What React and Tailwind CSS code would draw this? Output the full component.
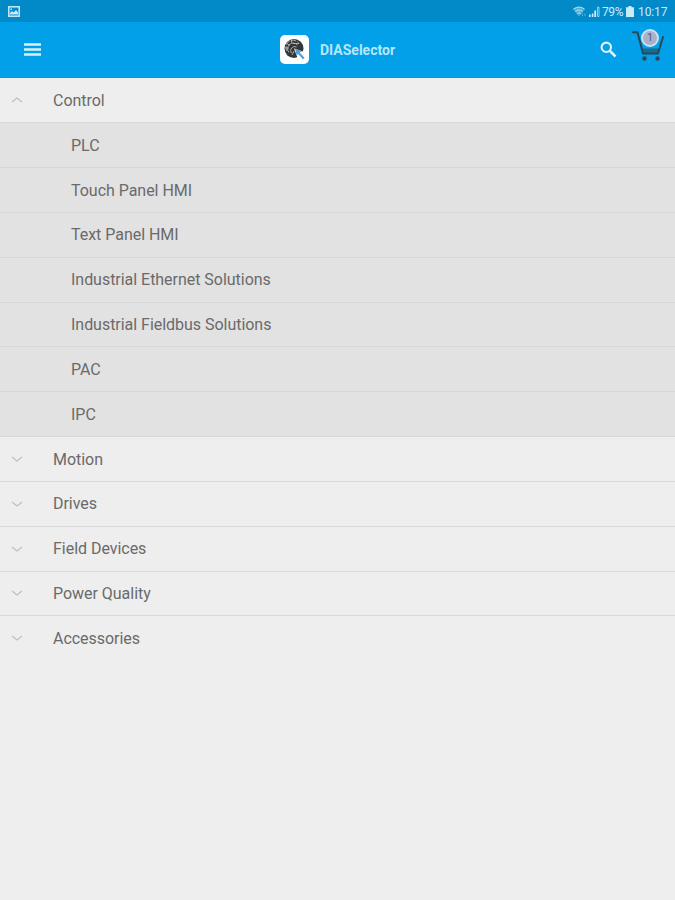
import React, { useState } from "react";

const categories = [
  {
    name: "Control",
    items: [
      "PLC",
      "Touch Panel HMI",
      "Text Panel HMI",
      "Industrial Ethernet Solutions",
      "Industrial Fieldbus Solutions",
      "PAC",
      "IPC",
    ],
  },
  { name: "Motion", items: [] },
  { name: "Drives", items: [] },
  { name: "Field Devices", items: [] },
  { name: "Power Quality", items: [] },
  { name: "Accessories", items: [] },
];

function StatusBar() {
  return (
    <div className="flex h-[22px] items-center justify-between bg-[#0289c8] pl-2 pr-[8px] text-[#c9ecfb]">
      <svg width="12" height="11" viewBox="0 0 12 11" className="mt-px">
        <rect x="0.8" y="0.8" width="10.4" height="9.4" fill="none" stroke="currentColor" strokeWidth="1.5" />
        <path d="M2 8.5V7l2-2 1.5 1.5L8 4l2 2.5v2z" fill="currentColor" />
        <rect x="2.5" y="2.5" width="1.5" height="1.5" fill="currentColor" />
      </svg>
      <div className="flex items-center pt-px text-[12px] leading-none">
        <svg width="14" height="11" viewBox="0 0 14 11" className="mr-px">
          <path d="M0 3C3.5 0 8.5 0 12 3L6 10.5z" fill="currentColor" opacity="0.4" />
          <path
            d="M0.5 3.2C4 0.4 8 0.4 11.5 3.2M2.5 5.4C4.8 3.6 7.2 3.6 9.5 5.4M4.3 7.5C5.4 6.700 6.600 6.700 7.700 7.500"
            fill="none"
            stroke="currentColor"
            strokeWidth="0.8"
          />
          <path d="M9.5 7.500v2.500M12 7.500v2.500" stroke="currentColor" strokeWidth="0.8" opacity="0.5" />
        </svg>
        <svg width="12" height="11" viewBox="0 0 12 11" className="mr-[2px]">
          <path d="M1 8.5h1.6V11H1zM3.8 7.500h1.6V11H3.8zM6.300 4.500h1.800V11H6.300z" fill="currentColor" />
          <path d="M9.500 1.200h1.500v9.300H9.500z" fill="none" stroke="currentColor" strokeWidth="0.7" />
        </svg>
        <span className="w-[22px] whitespace-nowrap tracking-[-0.4px]">79%</span>
        <svg width="8" height="11" viewBox="0 0 8 11" className="ml-[2px] mr-[4px]">
          <path d="M2.5 0h3v1.3H8V11H0V1.3h2.5z" fill="currentColor" />
        </svg>
        <span className="w-[29px] whitespace-nowrap tracking-[-0.1px]">10:17</span>
      </div>
    </div>
  );
}

function Logo() {
  return (
    <svg width="29" height="29" viewBox="0 0 29 29">
      <rect width="29" height="29" rx="5" fill="#fbfdfe" />
      <circle cx="14" cy="13.5" r="9.5" fill="#343537" />
      <g fill="none" stroke="#b4b7b9" strokeWidth="0.9">
        <path d="M7 16a7 7 0 0 1 12-7.5" strokeDasharray="5 1.5" />
        <path d="M9 17.5a5.3 5.3 0 0 1 8.5-7.5" />
        <path d="M11.500 18a4 4 0 0 1 5-6M7 8.5l3 2M5 13h4M11 5l1 3M13 8.500h6M12 20l2-4" />
      </g>
      <path d="M14 13.500l12 4-1 7-7-0.500z" fill="#fbfdfe" />
      <path d="M15 13.500l7 2.800-2.300 1.200 4.800 5.300-1.600 1.400-4.900-5.400-1.200 2z" fill="#529fd0" />
    </svg>
  );
}

function Cart({ count }) {
  return (
    <div className="relative h-[34px] w-[34px] text-[#26495b]">
      <svg width="34" height="34" viewBox="0 0 34 34">
        <path
          d="M2 3.300H6.500L12 24.500H27L32 8"
          fill="none"
          stroke="currentColor"
          strokeWidth="2"
          strokeLinecap="round"
          strokeLinejoin="round"
        />
        <path d="M10.500 19.500H28L26.500 24H11.500z" fill="currentColor" opacity="0.6" />
        <circle cx="13.500" cy="29.500" r="2.200" fill="currentColor" />
        <circle cx="26.500" cy="29.500" r="2.200" fill="currentColor" />
      </svg>
      <span className="absolute left-[10px] top-0 flex h-[18px] w-[18px] items-center justify-center rounded-full border-2 border-[#c8e2f5] bg-[#a9b1ca] text-[10px] leading-none text-[#4d5870]">
        {count}
      </span>
    </div>
  );
}

function Header() {
  return (
    <header className="flex h-14 items-center border-b border-[#0994dc] bg-[#02a0e9]">
      <div className="flex w-[280px] pl-6">
        <svg width="17" height="13" viewBox="0 0 17 13" className="-mt-px">
          <path d="M0 1.5h17M0 6.5h17M0 11.5h17" stroke="#d5f1fd" strokeWidth="2.3" />
        </svg>
      </div>
      <div className="flex items-center gap-[11px]">
        <Logo />
        <h1 className="w-[76px] whitespace-nowrap pt-[2px] text-[14px] font-bold text-[#b5e7fb]">
          DIASelector
        </h1>
      </div>
      <div className="flex flex-1 items-center justify-end pr-[10px]">
        <svg width="17" height="17" viewBox="0 0 17 17" className="mr-[14px]">
          <circle cx="6.3" cy="6.3" r="4.7" fill="none" stroke="#e0f5fe" strokeWidth="2.1" />
          <path d="M10 10l5.5 5.5" stroke="#e0f5fe" strokeWidth="2.5" />
        </svg>
        <div className="-mt-[8px]">
          <Cart count={1} />
        </div>
      </div>
    </header>
  );
}

function Chevron({ open }) {
  return (
    <svg width="12" height="6" viewBox="0 0 12 6" className="ml-[11px] mr-[30px] shrink-0">
      <path
        d={open ? "M1 5l5-4 5 4" : "M1 1l5 4 5-4"}
        fill="none"
        stroke="#bebebe"
        strokeWidth="1.1"
      />
    </svg>
  );
}

function App() {
  const [openName, setOpenName] = useState("Control");

  return (
    <div className="min-h-screen bg-[#eeeeee] font-['Roboto',sans-serif] text-[#6a6a6a]">
      <StatusBar />
      <Header />
      <ul className="pt-[0.4px] text-[16px] tracking-[-0.03px]">
        {categories.map((category, i) => {
          const open = category.name === openName;
          return (
            <li key={category.name}>
              <button
                className={`flex h-[44.83px] w-full items-center border-b text-left ${
                  i === categories.length - 1 ? "border-transparent" : "border-[#d8d8d8]"
                }`}
                onClick={() => setOpenName(open ? "" : category.name)}
              >
                <Chevron open={open} />
                <span className="pt-[1.4px]">{category.name}</span>
              </button>
              {open &&
                category.items.map((item) => (
                  <div
                    key={item}
                    className="flex h-[44.83px] items-center border-b border-[#d7d7d7] bg-[#e2e2e2] pl-[71px]"
                  >
                    <span className="pt-[1.4px]">{item}</span>
                  </div>
                ))}
            </li>
          );
        })}
      </ul>
    </div>
  );
}

export default App;
